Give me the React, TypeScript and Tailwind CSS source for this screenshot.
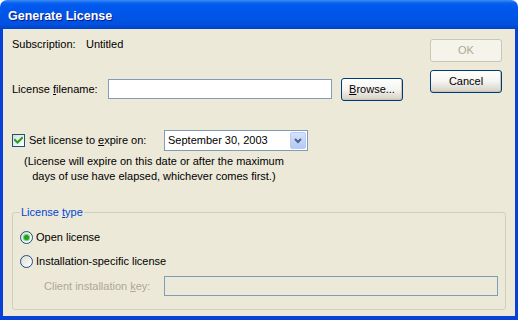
import React from 'react'

const font = { fontFamily: '"Liberation Sans", Arial, sans-serif' }

function XpButton({ children, disabled = false, className = '' }: { children: React.ReactNode; disabled?: boolean; className?: string }) {
  return (
    <button
      disabled={disabled}
      className={`flex h-[23px] items-center justify-center rounded-[3px] border text-[11px] ${
        disabled
          ? 'border-[#C9C7BA] bg-[#F5F4EA] text-[#ACA899]'
          : 'border-[#003C74] bg-gradient-to-b from-[#FFFFFF] via-[#F4F4F0] to-[#D6D0C5] text-black shadow-[inset_-1px_-1px_0_#C8C4B8]'
      } ${className}`}
    >
      {children}
    </button>
  )
}

function Checkbox({ checked }: { checked: boolean }) {
  return (
    <span className="flex h-[13px] w-[13px] shrink-0 items-center justify-center border border-[#1C5180] bg-gradient-to-br from-[#DCDCD7] to-[#FFFFFF]">
      {checked && (
        <svg width="9" height="9" viewBox="0 0 9 9">
          <path d="M1 4 L3.5 6.5 L8 2" stroke="#21A121" strokeWidth="2" fill="none" strokeLinecap="square" />
        </svg>
      )}
    </span>
  )
}

function Radio({ checked }: { checked: boolean }) {
  return (
    <span className="flex h-[13px] w-[13px] shrink-0 items-center justify-center rounded-full border border-[#1C5180] bg-gradient-to-br from-[#DCDCD7] to-[#FFFFFF]">
      {checked && <span className="h-[5px] w-[5px] rounded-full bg-[#21A121] shadow-[0_0_0_1px_#6FD46F]" />}
    </span>
  )
}

export default function App() {
  return (
    <div className="h-[320px] w-[518px] text-[11px] text-black" style={font}>
      <div className="flex h-full flex-col overflow-hidden rounded-t-[7px]">
        {/* title bar */}
        <div className="flex h-[29px] shrink-0 items-center bg-[linear-gradient(to_bottom,#3A8CF6_0px,#0A62EF_3px,#0058EE_6px,#0055E6_60%,#0250DF_85%,#0042C6_100%)] pl-[8px] pt-[4px]">
          <span className="text-[12.5px] font-bold text-white [text-shadow:1px_1px_#0A1883]">Generate License</span>
        </div>

        {/* client area */}
        <div className="flex flex-1 flex-col border-x-[3px] border-b-[4px] border-[#0841D8] bg-[#ECE9D8] px-[9px] pb-[6px]">
          <div className="flex">
            <div className="flex flex-1 flex-col">
              <div className="mt-[8px] flex h-[14px] items-center">
                <span className="w-[74px]">Subscription:</span>
                <span>Untitled</span>
              </div>

              <div className="mt-[27px] flex h-[22px] items-center">
                <span className="w-[96px]">
                  License <span className="underline">f</span>ilename:
                </span>
                <span className="h-[20px] w-[224px] border border-[#7F9DB9] bg-white" />
                <XpButton className="ml-[9px] w-[62px]">
                  <span className="underline">B</span>rowse...
                </XpButton>
              </div>

              <div className="mt-[30px] flex h-[21px] items-center">
                <span className="flex w-[152px] items-center">
                  <Checkbox checked />
                  <span className="ml-[4px]">
                    Set license to <span className="underline">e</span>xpire on:
                  </span>
                </span>
                <div className="flex h-[21px] w-[144px] items-center border border-[#7F9DB9] bg-white pl-[3px] pr-[1px]">
                  <span className="flex-1">September 30, 2003</span>
                  <span className="flex h-[17px] w-[16px] items-center justify-center rounded-[2px] border border-[#B9CCF5] bg-gradient-to-b from-[#D6E2FD] to-[#B4C8F6]">
                    <svg width="8" height="6" viewBox="0 0 8 6">
                      <path d="M1 1 L4 4 L7 1" stroke="#4D6185" strokeWidth="2" fill="none" />
                    </svg>
                  </span>
                </div>
              </div>

              <p className="ml-[12px] mt-[3px] self-start text-center leading-[15px]">
                (License will expire on this date or after the maximum
                <br />
                days of use have elapsed, whichever comes first.)
              </p>
            </div>

            <div className="mr-[4px] mt-[10px] flex w-[72px] flex-col gap-[8px]">
              <XpButton disabled className="w-full">OK</XpButton>
              <XpButton className="w-full">Cancel</XpButton>
            </div>
          </div>

          {/* license type group */}
          <fieldset className="mt-[21px] flex flex-1 flex-col rounded-[3px] border border-[#D0D0BF] pl-[7px] pr-[7px]">
            <legend className="px-[1px] leading-[14px] text-[#0046D5]">
              License <span className="underline">t</span>ype
            </legend>
            <label className="mt-[11px] flex h-[14px] items-center">
              <Radio checked />
              <span className="ml-[3px]">Open license</span>
            </label>
            <label className="mt-[10px] flex h-[14px] items-center">
              <Radio checked={false} />
              <span className="ml-[3px]">Installation-specific license</span>
            </label>
            <div className="mt-[8px] flex h-[20px] items-center">
              <span className="ml-[24px] w-[120px] text-[#ACA899]">
                Client installation <span className="underline">k</span>ey:
              </span>
              <span className="h-[20px] flex-1 border border-[#7F9DB9]" />
            </div>
          </fieldset>
        </div>
      </div>
    </div>
  )
}
